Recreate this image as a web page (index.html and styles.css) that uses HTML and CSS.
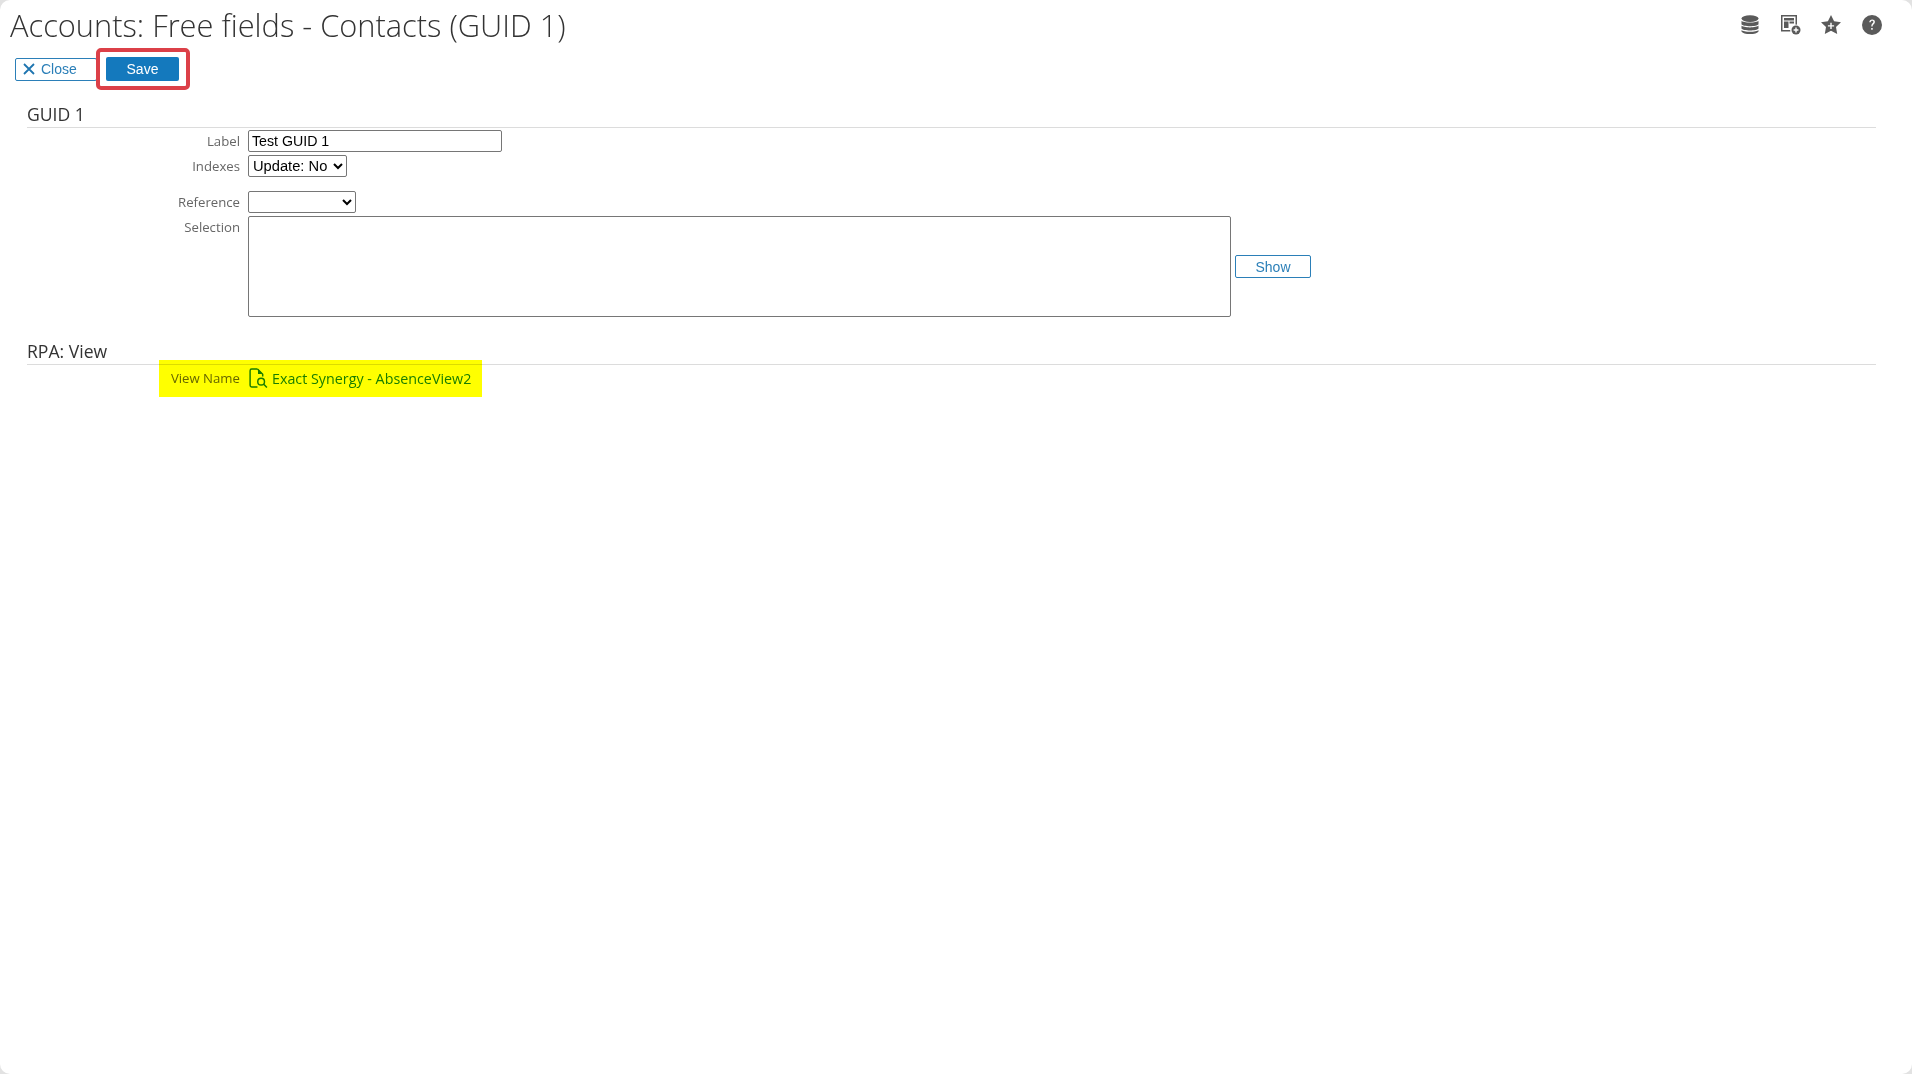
FILE: index.html
```html
<!DOCTYPE html>
<html lang="en">
<head>
    <meta charset="UTF-8">
    <title>Accounts: Free fields - Contacts (GUID 1)</title>
    <link rel="stylesheet" href="styles.css">
</head>
<body>

    <div class="page">
        <div class="header">
            <h1>Accounts: Free fields - Contacts (GUID 1)</h1>
            <div class="header-icons">
                <svg class="icon" viewBox="0 0 20 20"><ellipse cx="10" cy="3.600" rx="8.500" ry="3.400"/><path d="M1.500 5.800c1.500 2.400 15.500 2.400 17 0v3.400c-1.500 2.600-15.500 2.600-17 0zM1.500 10.600c1.500 2.400 15.500 2.400 17 0v3c-1.500 2.600-15.500 2.600-17 0zM1.500 15c1.500 2.400 15.500 2.400 17 0v1.400c-1.500 3.400-15.500 3.400-17 0z"/></svg>
                <svg class="icon" viewBox="0 0 20 20"><path d="M0 0h16v10.500h-1.500V1.500h-13v13.500h8v1.500H0z"/><path d="M3 3h10v2.500H3zM3 6.500h4.500V13H3zM8.500 6.500H13v2H8.500z"/><circle cx="15" cy="15" r="5.600" fill="#fff"/><circle cx="15" cy="15" r="4.500"/><path d="M14.300 12.600h1.400v1.700h1.700v1.400h-1.700v1.700h-1.400v-1.700h-1.700v-1.400h1.700z" fill="#fff"/></svg>
                <svg class="icon icon-star" viewBox="0 0 20 20"><path fill-rule="evenodd" d="M10 0l3.100 6.200 6.900 1-5 4.800 1.200 6.900L10 15.700l-6.200 3.200L5 12 0 7.200l6.900-1zM9.300 7.800v2.400H6.900v1.400h2.400V14h1.400v-2.400h2.400v-1.400h-2.400V7.800z"/></svg>
                <svg class="icon" viewBox="0 0 20 20"><path fill-rule="evenodd" d="M10 0a10 10 0 1 1 0 20a10 10 0 0 1 0-20zM7.300 7.300h1.400c.1-1 .6-1.500 1.400-1.500s1.300.5 1.300 1.200c0 1.300-2.100 1.700-2.100 3.900v.6h1.300v-.5c0-1.800 2.300-2 2.300-4.100 0-1.400-1.100-2.300-2.700-2.300S7.400 5.500 7.300 7.300zM9.200 13v1.800h1.500V13z"/></svg>
            </div>
        </div>

        <div class="toolbar">
            <button class="btn btn-close" type="button">
                <svg class="close-x" viewBox="0 0 12 12"><path d="M1 1l10 10M11 1L1 11"/></svg>
                Close
            </button>
            <button class="btn btn-save" type="button">Save</button>
        </div>

        <section class="section section-guid">
            <h2>GUID 1</h2>
            <div class="row row-label">
                <label>Label</label>
                <input class="input-label" type="text" value="Test GUID 1">
            </div>
            <div class="row row-indexes">
                <label>Indexes</label>
                <select class="select-indexes"><option>Update: No</option></select>
            </div>
            <div class="row row-reference">
                <label>Reference</label>
                <select class="select-reference"><option></option></select>
            </div>
            <div class="row row-selection">
                <label>Selection</label>
                <textarea class="selection-box"></textarea>
                <button class="btn btn-show" type="button">Show</button>
            </div>
        </section>

        <section class="section section-rpa">
            <h2>RPA: View</h2>
            <div class="row row-view">
                <label>View Name</label>
                <a class="view-link" href="#">
                    <svg class="doc-icon" viewBox="0 0 20 20"><path d="M9 1H3.500A1.500 1.500 0 0 0 2 2.500v14A1.500 1.500 0 0 0 3.500 18H9"/><path d="M9 1l5 5v2"/><path class="doc-fold" d="M9.500 1l4.500 4.800H9.500z"/><circle cx="12.500" cy="13" r="3.200"/><path d="M15 15.500l3 3"/></svg>
                    Exact Synergy - AbsenceView2
                </a>
            </div>
        </section>
    </div>

    <!-- Annotations drawn over the screenshot -->
    <div class="mark-red"></div>
    <div class="mark-yellow"></div>

</body>
</html>
```

FILE: styles.css
```css
html, body {
    margin: 0;
    height: 100%;
}

body {
    position: relative;
    overflow: hidden;
    background-color: #e2e2e2;
    font-family: "Open Sans", sans-serif;
    color: #333;
}

.page {
    box-sizing: border-box;
    height: 100%;
    padding: 0 36px 0 10px;
    background-color: #FFFFFF;
    border-radius: 10px;
}

.header {
    display: flex;
    justify-content: space-between;
    align-items: center;
    height: 50px;
}

h1 {
    margin: 0;
    font-size: 30.8px;
    font-weight: 300;
    color: #333;
}

.header-icons {
    display: flex;
    gap: 21px;
    align-items: center;
    margin-right: -6px;
}

.icon {
    width: 20px;
    height: 20px;
    fill: #5a5a5a;
}

.icon-star {
    margin-left: -1px;
}

.toolbar {
    display: flex;
    gap: 9px;
    padding-left: 5px;
    padding-top: 1px;
    align-items: center;
    height: 36px;
}

.btn {
    font-family: "Liberation Sans", Arial, sans-serif;
    font-size: 14px;
    border-radius: 2px;
    cursor: pointer;
}

.btn-close {
    width: 82px;
    height: 23px;
    padding: 0 0 0 7px;
    display: flex;
    align-items: center;
    gap: 6px;
    background: #fff;
    color: #2b7fb8;
    border: 1px solid #2b7fb8;
}

.close-x {
    width: 12px;
    height: 12px;
    stroke: #1f75b0;
    stroke-width: 1.8;
    fill: none;
}

.btn-save {
    width: 73px;
    height: 24px;
    padding: 0;
    background: #1479bd;
    color: #fff;
    border: none;
}

.section {
    margin-left: 17px;
}

h2 {
    margin: 0;
    height: 30px;
    line-height: 34px;
    font-size: 17.6px;
    font-weight: 400;
    color: #333;
    border-bottom: 1px solid #dcdcdc;
}

.section-guid {
    margin-top: 10px;
}

.section-rpa {
    margin-top: 17px;
}

.row {
    display: flex;
    align-items: center;
    gap: 8px;
}

.row label {
    width: 213px;
    text-align: right;
    font-size: 13.2px;
    color: #666;
    flex-shrink: 0;
}

.row-label {
    margin-top: 2px;
}

.row-indexes {
    margin-top: 3px;
}

.row-reference {
    margin-top: 14px;
}

.row-selection {
    margin-top: 3px;
    align-items: flex-start;
}

.row-selection label {
    margin-top: 2px;
}

input, select, textarea {
    box-sizing: border-box;
    border: 1px solid #767676;
    border-radius: 2px;
    background: #fff;
    color: #000;
    margin: 0;
    font-family: "Liberation Sans", Arial, sans-serif;
    font-size: 14.2px;
}

.input-label {
    width: 254px;
    height: 22px;
    padding: 0 3px;
}

.select-indexes {
    width: 99px;
    height: 22px;
    font-size: 14.7px;
}

.select-reference {
    width: 108px;
    height: 22px;
}

.selection-box {
    width: 983px;
    height: 101px;
    resize: none;
}

.btn-show {
    width: 76px;
    height: 23px;
    padding: 0;
    margin: 39px 0 0 -4px;
    background: #fff;
    color: #2b7fb8;
    border: 1px solid #2b7fb8;
}

.row-view {
    height: 26px;
}

.view-link {
    display: flex;
    align-items: center;
    gap: 3px;
    font-size: 14.3px;
    color: #1a7ec8;
    text-decoration: none;
}

.doc-icon {
    width: 21px;
    height: 21px;
    fill: none;
    stroke: #1a7ec8;
    stroke-width: 1.4;
}

.doc-fold {
    fill: #1a7ec8;
    stroke: none;
}

.mark-red {
    position: absolute;
    left: 96px;
    top: 48px;
    width: 86px;
    height: 34px;
    border: 4px solid #dc4048;
    border-radius: 5px;
}

.mark-yellow {
    position: absolute;
    left: 159px;
    top: 360px;
    width: 323px;
    height: 37px;
    background: #ffff00;
    mix-blend-mode: multiply;
}
```
